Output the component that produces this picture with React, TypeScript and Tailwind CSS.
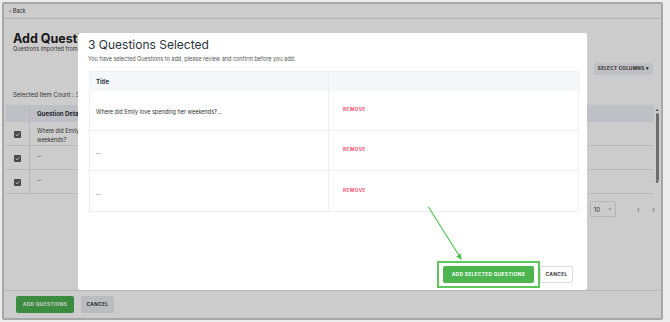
import React from "react";

const font = { fontFamily: "Inter, 'Noto Sans', sans-serif" };

function Check() {
  return (
    <div className="w-[7px] h-[7px] rounded-[1px] bg-[#5c5c5c] flex items-center justify-center">
      <svg width="5" height="5" viewBox="0 0 10 10">
        <path d="M1.5 5.2 L4 7.6 L8.6 2.4" stroke="#fff" strokeWidth="1.8" fill="none" />
      </svg>
    </div>
  );
}

function Remove() {
  return (
    <span className="text-[4.6px] font-bold tracking-[0.55px] text-[#ff4d6d]">REMOVE</span>
  );
}

export default function App() {
  const rows = [
    "Where did Emily love spending her weekends?...",
    "...",
    "...",
  ];
  return (
    <div className="relative w-[670px] h-[322px] bg-[#ececec] overflow-hidden" style={font}>
      <div className="absolute left-[2px] top-[2px] w-[661px] h-[318px] border-2 border-[#a7a7a7] rounded-[2px] bg-white overflow-hidden">
        {/* page */}
        <div className="flex flex-col h-full text-[#2b303b]">
          <div className="h-[15px] border-b border-[#dedede] px-[5px] flex items-center text-[5.5px] text-[#333]">
            <span>‹ Back</span>
          </div>
          <div className="px-[9px] pt-[13px]">
            <div className="text-[12.5px] font-bold leading-[13px] text-[#222]">Add Questions</div>
            <div className="text-[5.5px] leading-[7px] mt-[1px] text-[#444]">Questions imported from the selected library</div>
          </div>
          <div className="flex justify-end pr-[8px] mt-[10px]">
            <div className="h-[12px] w-[59px] rounded-[2px] bg-[#eef0f4] flex items-center justify-center text-[4.6px] font-bold tracking-[0.3px] text-[#333]">
              SELECT COLUMNS&nbsp;▾
            </div>
          </div>
          <div className="px-[9px] mt-[16px] text-[6px] leading-[8px] text-[#444]">Selected Item Count : 3</div>
          <div className="flex ml-[2px] mt-[6px] mr-[2px]">
            <div className="flex-1">
              <div className="flex h-[17px] bg-[#eff1f7] items-center">
                <div className="w-[24px] h-full border-r border-[#e4e6ec]" />
                <div className="pl-[7px] text-[6px] font-bold text-[#2b303b]">Question Details</div>
              </div>
              {[["Where did Emily love spending her", "weekends?"], ["", "..."], ["", "..."]].map((r, i) => (
                <div key={i} className="flex h-[24px] border-b border-[#e6e6e6]">
                  <div className="w-[24px] border-r border-[#e6e6e6] flex items-start justify-center pt-[9px]">
                    <Check />
                  </div>
                  <div className="pl-[7px] pt-[5px] text-[5.5px] leading-[9px] text-[#444]">
                    <div>{r[0]}</div>
                    <div>{r[1]}</div>
                  </div>
                </div>
              ))}
            </div>
            <div className="w-[4px] ml-[1px] flex flex-col items-center pt-[4px]">
              <div className="text-[3px] leading-none text-[#555]">▲</div>
              <div className="w-[3px] h-[68px] bg-[#888] rounded-full mt-[1px]" />
              <div className="text-[3px] leading-none text-[#555] mt-[1px]">▼</div>
            </div>
          </div>
          <div className="flex justify-end items-center mt-[7px] pr-[6px]">
            <div className="h-[16px] w-[26px] border border-[#e3e3e3] rounded-[2px] flex items-center justify-between px-[3px] text-[6px] text-[#333]">
              <span>10</span>
              <span className="text-[5px]">⌄</span>
            </div>
            <span className="ml-[21px] text-[8px] text-[#888]">‹</span>
            <span className="ml-[12px] text-[8px] text-[#888]">›</span>
          </div>
          <div className="flex-1" />
          <div className="h-[28px] flex items-center px-[12px] gap-[7px] border-t border-[#e6e6e6]">
            <div className="h-[17px] w-[58px] rounded-[2px] bg-[#4caf50] flex items-center justify-center text-[4.8px] font-bold tracking-[0.35px] text-white">
              ADD QUESTIONS
            </div>
            <div className="h-[17px] w-[33px] rounded-[2px] bg-[#e9ebf1] flex items-center justify-center text-[4.8px] font-bold tracking-[0.35px] text-[#333]">
              CANCEL
            </div>
          </div>
        </div>
        {/* overlay */}
        <div className="absolute inset-0 bg-black/20" />
        {/* modal */}
        <div className="absolute left-[74px] top-[29px] w-[509px] h-[257px] bg-white rounded-[2px] flex flex-col px-[10px] pt-[6px] pb-[2px]">
          <div className="text-[12px] leading-none text-[#2d3340] font-normal">3 Questions Selected</div>
          <div className="text-[5.5px] mt-[4px] text-[#555]">You have selected Questions to add, please review and confirm before you add.</div>
          <div className="mt-[8px] ml-[1px] mr-[-2px] border border-[#eef0f4]">
            <div className="flex h-[19px] bg-[#f6f7fb]">
              <div className="w-[239px] border-r border-[#eceef3] flex items-center pl-[6px] text-[6px] font-bold text-[#2d3340]">Title</div>
              <div className="flex-1" />
            </div>
            {rows.map((r, i) => (
              <div key={i} className={"flex h-[40px] " + (i < 2 ? "border-b border-[#eef0f4]" : "")}>
                <div className="w-[239px] border-r border-[#eef0f4] flex items-center pl-[6px] pt-[3px] text-[5.5px] text-[#333]">{r}</div>
                <div className="flex-1 flex items-center pl-[14px]">
                  <Remove />
                </div>
              </div>
            ))}
          </div>
          <div className="flex-1" />
          <div className="flex justify-end items-center pr-[4px]">
            <div className="border-2 border-[#5cc85c] px-[4px] py-[3px]">
              <div className="h-[17px] w-[91px] rounded-[2px] bg-[#4cb550] flex items-center justify-center text-[4.8px] font-bold tracking-[0.35px] text-white">
                ADD SELECTED QUESTIONS
              </div>
            </div>
            <div className="h-[17px] w-[33px] rounded-[2px] bg-white border border-[#dcdcdc] flex items-center justify-center text-[4.8px] font-bold tracking-[0.35px] text-[#333]">
              CANCEL
            </div>
          </div>
        </div>
      </div>
      {/* annotation arrow */}
      <svg className="absolute left-0 top-0 pointer-events-none" width="670" height="322">
        <line x1="428.3" y1="206.7" x2="459" y2="255.5" stroke="#4cc44c" strokeWidth="1.1" />
        <polygon points="456.2,256.4 460.8,253.5 461.7,260" fill="#4cc44c" />
      </svg>
    </div>
  );
}
